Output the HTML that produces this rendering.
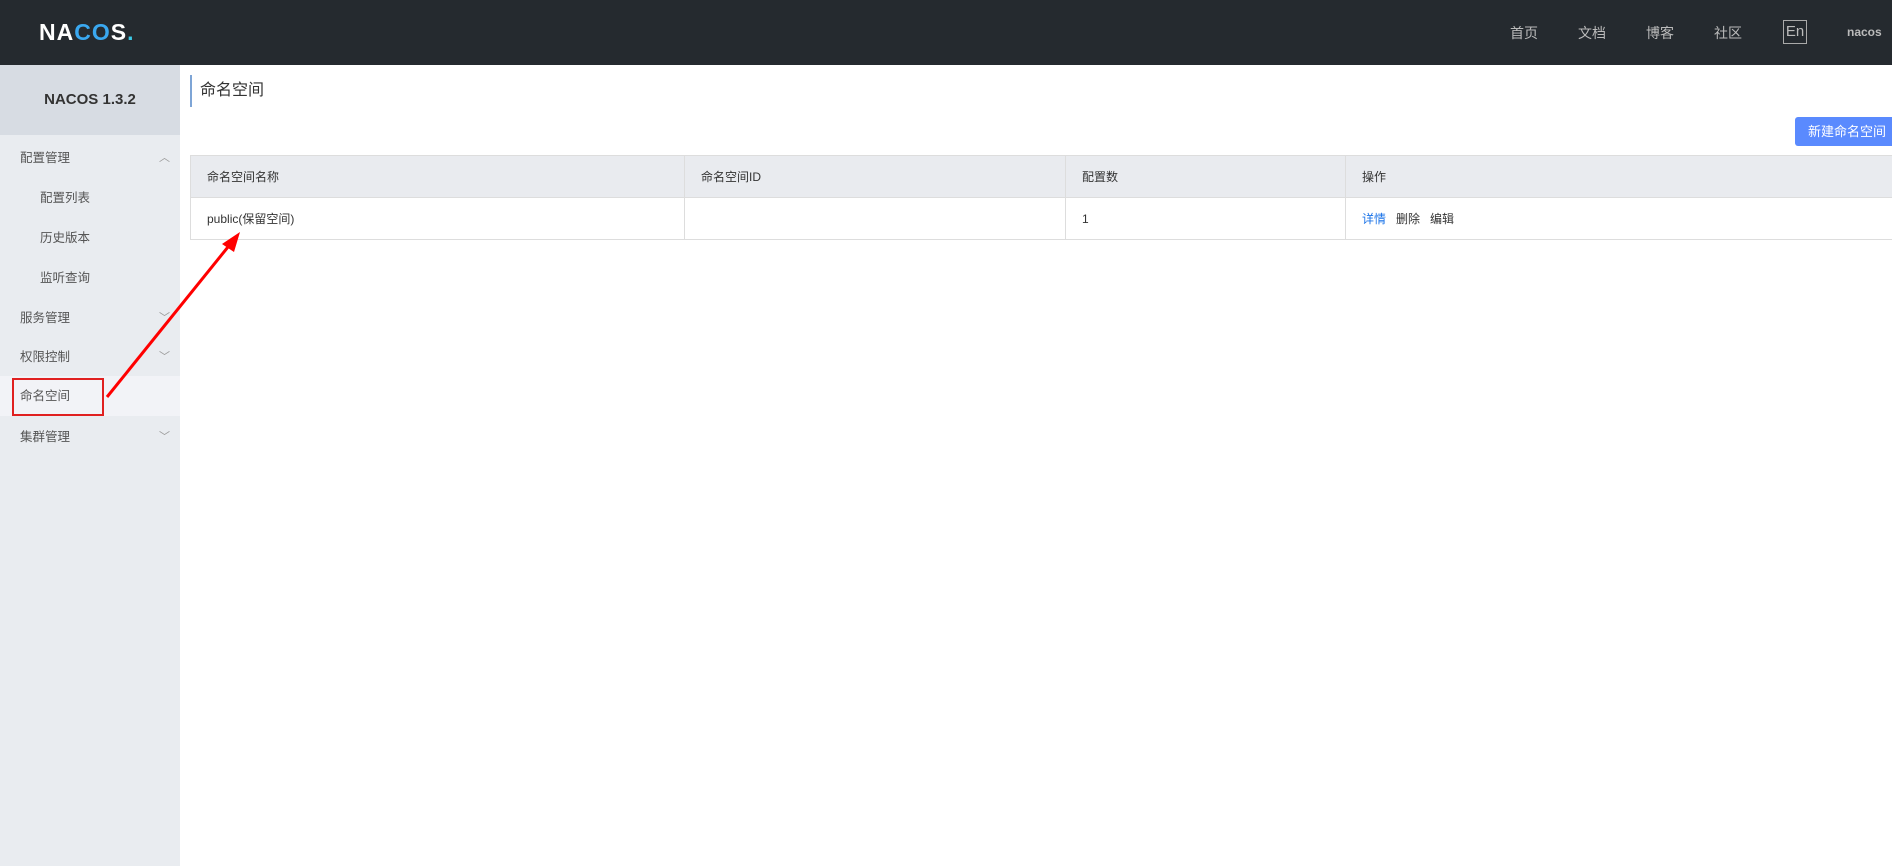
<!DOCTYPE html>
<html><head><meta charset="utf-8"><style>
*{margin:0;padding:0;box-sizing:border-box}
body{width:1892px;height:866px;font-family:"Liberation Sans","Noto Sans CJK SC",sans-serif;background:#fff;position:relative;overflow:hidden;font-size:13px;color:#333}
.hdr{position:absolute;left:0;top:0;width:1892px;height:65px;background:#252a2f}
.logo{position:absolute;left:39px;top:19px;font-size:23px;font-weight:bold;color:#fff;letter-spacing:1px;font-family:"Liberation Sans",sans-serif}
.nav{position:absolute;top:23px;font-size:14px;color:#bbb}
.en{position:absolute;left:1783px;top:20px;width:24px;height:24px;border:1px solid #aaa;color:#bbb;font-size:15px;text-align:center;line-height:22px}
.side{position:absolute;left:0;top:65px;width:180px;height:801px;background:#e9ecf0}
.stop{height:70px;background:#d7dce3;text-align:center;line-height:70px;font-weight:bold;font-size:15px;color:#333}
.it{position:absolute;left:0;width:180px;height:40px;line-height:40px;font-size:12.5px;color:#555;padding-left:20px}
.sub{padding-left:40px}
.ar{position:absolute;right:10px;top:0;color:#999;font-size:11px}
.sel{background:#f2f3f7}
.title{position:absolute;left:190px;top:75px;height:32px;border-left:2px solid #7ea5d6;padding-left:8px;font-size:16px;line-height:32px;color:#333}
.btn{position:absolute;left:1795px;top:117px;width:100px;height:29px;background:#5a8afe;border-radius:3px;color:#fff;font-size:13px;line-height:29px;padding-left:13px}
table{position:absolute;left:190px;top:155px;width:1710px;border-collapse:collapse;font-size:12px}
td{border:1px solid #ddd;padding-left:16px;height:42px;color:#333}
thead td{background:#e9ebef}
</style></head><body>
<div class="hdr">
<div class="logo">NA<span style="color:#3aa8f0">CO</span>S<span style="color:#3bc9e6">.</span></div>
<div class="nav" style="left:1510px">首页</div>
<div class="nav" style="left:1578px">文档</div>
<div class="nav" style="left:1646px">博客</div>
<div class="nav" style="left:1714px">社区</div>
<div class="en">En</div>
<div class="nav" style="left:1847px;top:25px;font-size:12px;font-weight:bold">nacos</div>
</div>
<div class="side"><div class="stop">NACOS 1.3.2</div></div>
<div class="it" style="top:138px">配置管理<span class="ar">︿</span></div>
<div class="it sub" style="top:178px">配置列表</div>
<div class="it sub" style="top:218px">历史版本</div>
<div class="it sub" style="top:258px">监听查询</div>
<div class="it" style="top:298px">服务管理<span class="ar">﹀</span></div>
<div class="it" style="top:337px">权限控制<span class="ar">﹀</span></div>
<div class="it sel" style="top:376px">命名空间</div>
<div class="it" style="top:417px">集群管理<span class="ar">﹀</span></div>
<div style="position:absolute;left:12px;top:378px;width:92px;height:38px;border:2px solid #e02020"></div>
<div class="title">命名空间</div>
<div class="btn">新建命名空间</div>
<table>
<thead><tr><td style="width:494px">命名空间名称</td><td style="width:381px">命名空间ID</td><td style="width:280px">配置数</td><td>操作</td></tr></thead>
<tbody><tr><td>public(保留空间)</td><td></td><td>1</td><td><span style="color:#1a73e8">详情</span>&nbsp;&nbsp; 删除 &nbsp;&nbsp;编辑</td></tr></tbody>
</table>
<svg style="position:absolute;left:0;top:0" width="1892" height="866"><line x1="107" y1="397" x2="232" y2="242" stroke="#f00" stroke-width="3"/><polygon points="240,232 222,244 234,252" fill="#f00"/></svg>
</body></html>
